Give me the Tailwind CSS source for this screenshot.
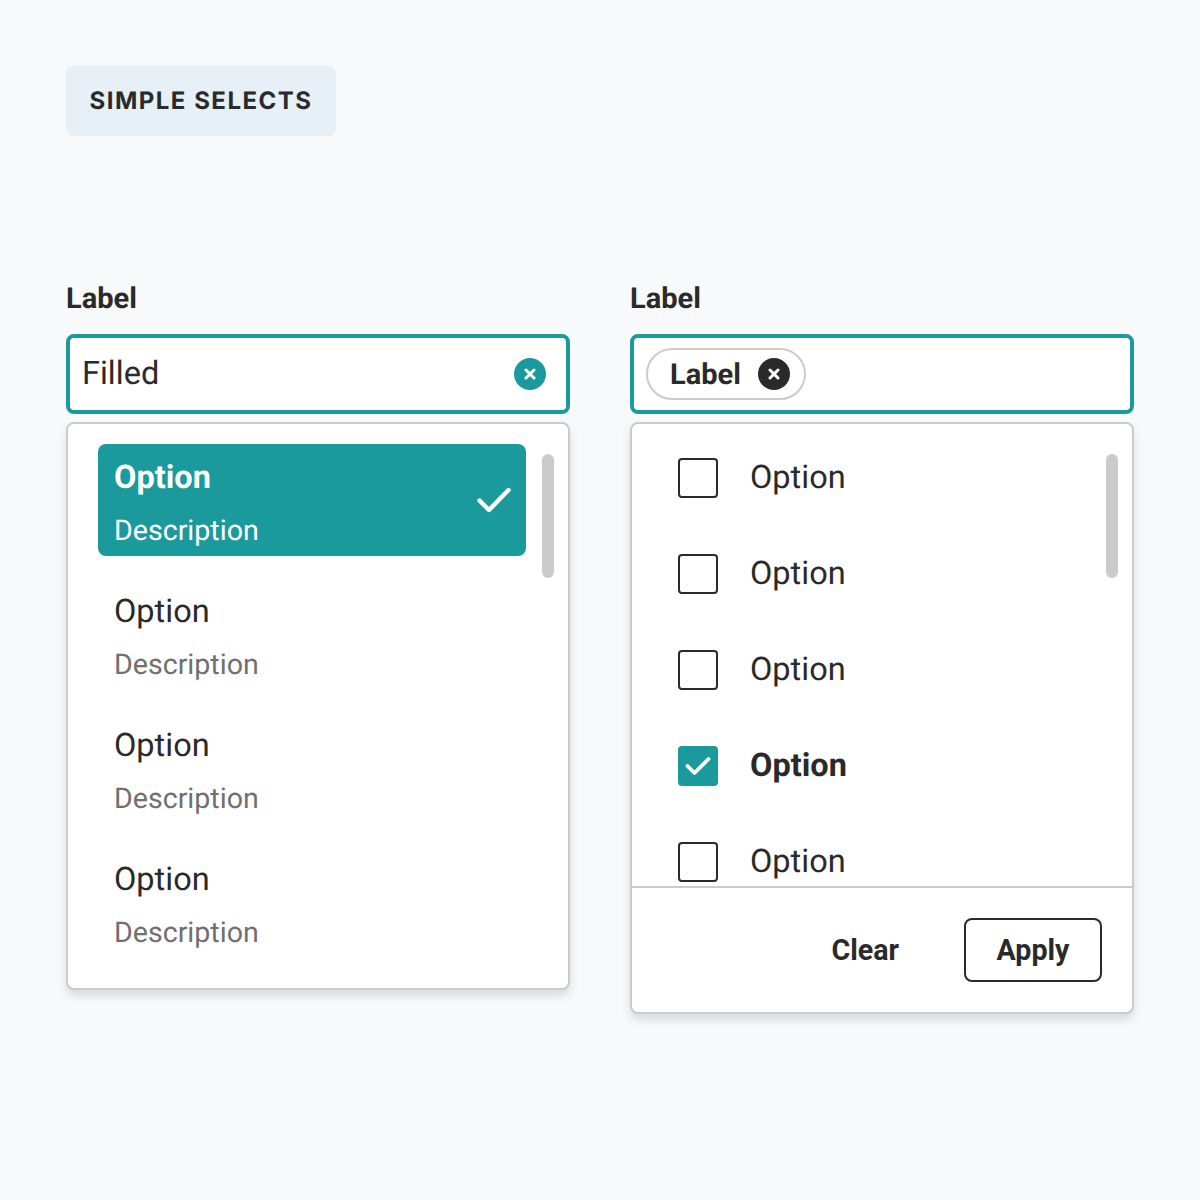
<!DOCTYPE html>
<html lang="en">
<head>
  <meta charset="UTF-8">
  <meta name="viewport" content="width=device-width, initial-scale=1.0">
  <title>Simple selects</title>
  <script src="https://cdn.jsdelivr.net/npm/@tailwindcss/browser@4"></script>
</head>
<body class="bg-[#f8f9fb] font-['Roboto',sans-serif] text-[#2a2a2a] w-[1200px] h-[1200px] overflow-hidden [text-rendering:geometricPrecision]">
  <div class="pt-[66px] px-[66px]">
    <div class="w-[270px] h-[70px] rounded-lg bg-[#e6f0f6] flex items-center justify-center font-['Inter',sans-serif] font-bold text-[24px] tracking-[1.5px]">SIMPLE SELECTS</div>

    <div class="flex gap-[60px] mt-[142px]">
      <!-- Left select -->
      <div class="w-[504px]">
        <div class="h-[40px] flex items-center text-[29px] font-bold leading-none pt-[3px]">Label</div>
        <div class="mt-[16px] h-[80px] bg-white border-4 border-[#1b9a9e] rounded-lg flex items-center justify-between pl-[12px] pr-[20px]">
          <span class="text-[32.5px] leading-[40px] pb-[2px]">Filled</span>
          <span class="w-[32px] h-[32px] rounded-full bg-[#1b9a9e] flex items-center justify-center">
            <svg width="12" height="12" viewBox="0 0 12 12" fill="none" stroke="#fff" stroke-width="3" stroke-linecap="round"><path d="M2 2l8 8M10 2l-8 8"/></svg>
          </span>
        </div>
        <div class="mt-[8px] h-[568px] bg-white border-2 border-[#cbcbcb] rounded-lg shadow-[0_6px_10px_rgba(0,0,0,0.12)] pt-[20px] pl-[30px] flex items-start">
          <div class="w-[428px] flex flex-col gap-[22px]">
            <div class="h-[112px] rounded-lg bg-[#1b9a9e] text-white pl-[16px] pr-[15px] flex items-center justify-between">
              <div class="self-start pt-[13px]">
                <div class="text-[32.5px] font-bold leading-[40px]">Option</div>
                <div class="text-[28.6px] leading-[36px] mt-[15px]">Description</div>
              </div>
              <svg width="34" height="26" viewBox="0 0 34 26" fill="none" stroke="#fff" stroke-width="4.4" stroke-linecap="round" stroke-linejoin="round"><path d="M2.5 13.5l9.5 9.5L31.5 3"/></svg>
            </div>
            <div class="h-[112px] pl-[16px] pt-[13px]">
              <div class="text-[32.5px] leading-[40px]">Option</div>
              <div class="text-[28.6px] leading-[36px] mt-[15px] text-[#707070]">Description</div>
            </div>
            <div class="h-[112px] pl-[16px] pt-[13px]">
              <div class="text-[32.5px] leading-[40px]">Option</div>
              <div class="text-[28.6px] leading-[36px] mt-[15px] text-[#707070]">Description</div>
            </div>
            <div class="h-[112px] pl-[16px] pt-[13px]">
              <div class="text-[32.5px] leading-[40px]">Option</div>
              <div class="text-[28.6px] leading-[36px] mt-[15px] text-[#707070]">Description</div>
            </div>
          </div>
          <div class="ml-[16px] mt-[10px] w-[12px] h-[124px] rounded-full bg-[#cbcbcb]"></div>
        </div>
      </div>

      <!-- Right select -->
      <div class="w-[504px]">
        <div class="h-[40px] flex items-center text-[29px] font-bold leading-none pt-[3px]">Label</div>
        <div class="mt-[16px] h-[80px] bg-white border-4 border-[#1b9a9e] rounded-lg flex items-center pl-[12px]">
          <div class="w-[160px] h-[52px] rounded-full border-2 border-[#cbcbcb] flex items-center justify-between pl-[22px] pr-[14px]">
            <span class="text-[29px] font-bold pt-[3px]">Label</span>
            <span class="w-[32px] h-[32px] rounded-full bg-[#2a2a2a] flex items-center justify-center">
              <svg width="12" height="12" viewBox="0 0 12 12" fill="none" stroke="#fff" stroke-width="3" stroke-linecap="round"><path d="M2 2l8 8M10 2l-8 8"/></svg>
            </span>
          </div>
        </div>
        <div class="mt-[8px] h-[592px] bg-white border-2 border-[#cbcbcb] rounded-lg shadow-[0_6px_10px_rgba(0,0,0,0.12)] relative flex flex-col">
          <div class="h-[462px] overflow-hidden pt-[6px] pl-[46px] flex flex-col shrink-0">
            <div class="h-[96px] shrink-0 flex items-center gap-[32px]">
              <span class="w-[40px] h-[40px] rounded-[4px] border-2 border-[#2a2a2a] bg-white"></span>
              <span class="text-[32.5px] leading-[40px] pb-[2px]">Option</span>
            </div>
            <div class="h-[96px] shrink-0 flex items-center gap-[32px]">
              <span class="w-[40px] h-[40px] rounded-[4px] border-2 border-[#2a2a2a] bg-white"></span>
              <span class="text-[32.5px] leading-[40px] pb-[2px]">Option</span>
            </div>
            <div class="h-[96px] shrink-0 flex items-center gap-[32px]">
              <span class="w-[40px] h-[40px] rounded-[4px] border-2 border-[#2a2a2a] bg-white"></span>
              <span class="text-[32.5px] leading-[40px] pb-[2px]">Option</span>
            </div>
            <div class="h-[96px] shrink-0 flex items-center gap-[32px]">
              <span class="w-[40px] h-[40px] rounded-[4px] bg-[#1b9a9e] flex items-center justify-center">
                <svg width="26" height="20" viewBox="0 0 26 20" fill="none" stroke="#fff" stroke-width="3.8" stroke-linecap="round" stroke-linejoin="round"><path d="M2.5 10l7 7L23.5 3"/></svg>
              </span>
              <span class="text-[32.5px] font-bold leading-[40px] pb-[2px]">Option</span>
            </div>
            <div class="h-[96px] shrink-0 flex items-center gap-[32px]">
              <span class="w-[40px] h-[40px] rounded-[4px] border-2 border-[#2a2a2a] bg-white"></span>
              <span class="text-[32.5px] leading-[40px] pb-[2px]">Option</span>
            </div>
          </div>
          <div class="flex-1 border-t-2 border-[#cbcbcb] flex items-start justify-end pt-[30px] pr-[30px] gap-[65px]">
            <button class="h-[64px] text-[28.6px] font-bold">Clear</button>
            <button class="w-[138px] h-[64px] rounded-lg border-2 border-[#2a2a2a] text-[28.6px] font-bold">Apply</button>
          </div>
          <div class="absolute top-[30px] right-[14px] w-[12px] h-[124px] rounded-full bg-[#cbcbcb]"></div>
        </div>
      </div>
    </div>
  </div>
</body>
</html>
